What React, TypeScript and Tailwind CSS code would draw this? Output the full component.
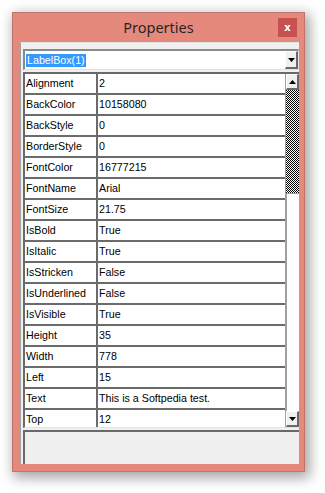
import React from 'react';

const rows: [string, string][] = [
  ['Alignment', '2'],
  ['BackColor', '10158080'],
  ['BackStyle', '0'],
  ['BorderStyle', '0'],
  ['FontColor', '16777215'],
  ['FontName', 'Arial'],
  ['FontSize', '21.75'],
  ['IsBold', 'True'],
  ['IsItalic', 'True'],
  ['IsStricken', 'False'],
  ['IsUnderlined', 'False'],
  ['IsVisible', 'True'],
  ['Height', '35'],
  ['Width', '778'],
  ['Left', '15'],
  ['Text', 'This is a Softpedia test.'],
  ['Top', '12'],
];

const Arrow: React.FC<{ up?: boolean }> = ({ up }) => (
  <svg width="7" height="4" viewBox="0 0 7 4">
    <path d={up ? 'M3.5 0 L7 4 L0 4 Z' : 'M0 0 L7 0 L3.5 4 Z'} fill="#000" />
  </svg>
);

const ScrollButton: React.FC<{ up?: boolean }> = ({ up }) => (
  <div className="flex h-[16px] w-full shrink-0 items-center justify-center border-t border-l border-b-2 border-r-2 border-t-white border-l-white border-b-[#696969] border-r-[#696969] bg-[#f0f0f0]">
    <Arrow up={up} />
  </div>
);

// dithered track of the old-style scrollbar
const Checker: React.FC = () => (
  <svg width="13" height="103" className="block shrink-0">
    <defs>
      <pattern id="chk" width="2" height="2" patternUnits="userSpaceOnUse">
        <rect width="2" height="2" fill="#fff" />
        <rect width="1" height="1" fill="#000" />
        <rect x="1" y="1" width="1" height="1" fill="#000" />
      </pattern>
    </defs>
    <rect width="13" height="103" fill="url(#chk)" />
  </svg>
);

const App: React.FC = () => {
  return (
    <div className="h-[493px] w-[325px] bg-white pl-[12px] pt-[12px] font-['Liberation_Sans',Arial,sans-serif]">
      <div className="flex h-[460px] w-[293px] flex-col border border-[#c4736a] bg-[#e6897d] shadow-[3px_4px_12px_2px_rgba(0,0,0,0.35)]">
        <div className="relative flex h-[29px] shrink-0 items-center justify-center">
          <span className="font-['Noto_Sans',sans-serif] text-[14.5px] text-[#262626]">Properties</span>
          <div className="absolute right-[7px] top-[5px] flex h-[19px] w-[19px] items-center justify-center bg-[#c75050]">
            <span className="font-['DejaVu_Sans',sans-serif] text-[10px] font-bold leading-none text-white">x</span>
          </div>
        </div>
        <div className="mb-[7px] ml-[7px] mr-[5px] flex flex-1 flex-col border-l border-t border-l-[#a0a0a0] border-t-[#e3e3e3] bg-[#f0f0f0] pl-[2px] pt-[6px] text-[10.7px] text-black">
          <div className="flex h-[21px] border-l-2 border-t-2 border-l-[#8a8a8a] border-t-[#8a8a8a] border-b border-r border-b-[#e3e3e3] border-r-[#e3e3e3] bg-white">
            <div className="flex flex-1 items-center pl-[1px]">
              <span className="bg-[#3399ff] px-[1px] leading-[13px] text-white">LabelBox(1)</span>
            </div>
            <div className="flex w-[13px] items-center justify-center border-l border-t border-b-2 border-r-2 border-l-white border-t-white border-b-[#696969] border-r-[#696969] bg-[#f0f0f0]">
              <Arrow />
            </div>
          </div>
          <div className="mt-[2px] flex h-[356px] border-l-2 border-t-2 border-l-[#696969] border-t-[#696969] border-b border-b-[#e3e3e3] bg-white">
            <div className="flex-1 overflow-hidden border-r border-r-[#a0a0a0]">
              {rows.map(([name, value]) => (
                <div key={name} className="flex h-[21px] border-b-2 border-b-[#6b6b6b]">
                  <div className="flex w-[73px] items-center border-r-2 border-r-[#6b6b6b] pl-[1px]">{name}</div>
                  <div className="flex flex-1 items-center pl-[1px]">{value}</div>
                </div>
              ))}
            </div>
            <div className="flex w-[13px] flex-col">
              <ScrollButton up />
              <Checker />
              <div className="flex-1 border-l border-t border-l-[#a0a0a0] border-t-[#a0a0a0] bg-white" />
              <ScrollButton />
            </div>
          </div>
          <div className="mt-[2px] flex-1 border-l-2 border-t-2 border-l-[#696969] border-t-[#696969] bg-[#f0f0f0]" />
        </div>
      </div>
    </div>
  );
};

export default App;
